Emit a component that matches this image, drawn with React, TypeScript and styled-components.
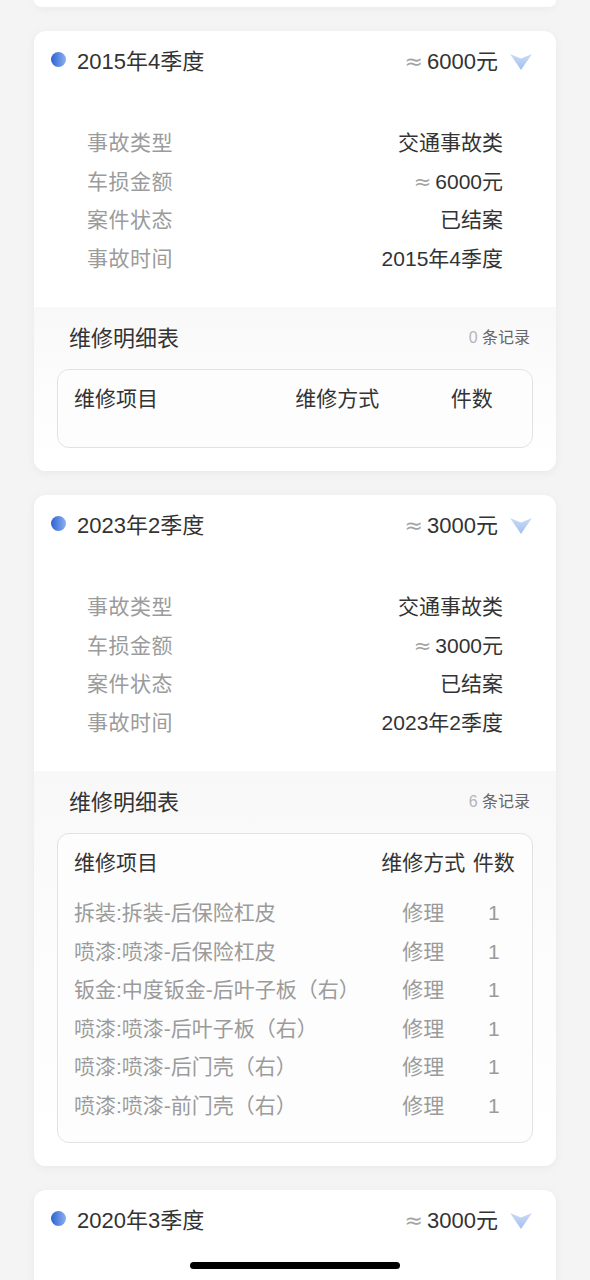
import React from 'react';
import styled, { createGlobalStyle } from 'styled-components';

type RepairItem = {
  name: string;
  method: string;
  count: number;
};

type AccidentRecord = {
  quarter: string;
  amount: number;
  type: string;
  status: string;
  repairs: RepairItem[];
};

const GlobalStyle = createGlobalStyle`
  html, body {
    margin: 0;
    padding: 0;
    background: #f4f4f4;
  }

  body {
    font-family: 'Liberation Sans', 'Noto Sans CJK SC', sans-serif;
    color: #333;
  }
`;

const records: AccidentRecord[] = [
  {
    quarter: '2015年4季度',
    amount: 6000,
    type: '交通事故类',
    status: '已结案',
    repairs: [],
  },
  {
    quarter: '2023年2季度',
    amount: 3000,
    type: '交通事故类',
    status: '已结案',
    repairs: [
      { name: '拆装:拆装-后保险杠皮', method: '修理', count: 1 },
      { name: '喷漆:喷漆-后保险杠皮', method: '修理', count: 1 },
      { name: '钣金:中度钣金-后叶子板（右）', method: '修理', count: 1 },
      { name: '喷漆:喷漆-后叶子板（右）', method: '修理', count: 1 },
      { name: '喷漆:喷漆-后门壳（右）', method: '修理', count: 1 },
      { name: '喷漆:喷漆-前门壳（右）', method: '修理', count: 1 },
    ],
  },
  {
    quarter: '2020年3季度',
    amount: 3000,
    type: '交通事故类',
    status: '已结案',
    repairs: [],
  },
];

const ArrowDown = () => (
  <S.Arrow viewBox="0 0 22 16" width="22" height="16">
    <defs>
      <linearGradient id="arrowFill" x1="0" y1="0" x2="0" y2="1">
        <stop offset="0" stopColor="#cadcf6" />
        <stop offset="1" stopColor="#a2bfef" />
      </linearGradient>
    </defs>
    <path d="M0 0 L11 4.5 L22 0 L11 16 Z" fill="url(#arrowFill)" />
  </S.Arrow>
);

const RecordCard = ({ record }: { record: AccidentRecord }) => {
  return (
    <S.Card>
      <S.Header>
        <S.Dot />
        <S.Title>{record.quarter}</S.Title>
        <S.HeaderAmount>
          <S.Approx>≈</S.Approx>
          {record.amount}元
        </S.HeaderAmount>
        <ArrowDown />
      </S.Header>

      <S.Details>
        <S.DetailRow>
          <S.Label>事故类型</S.Label>
          <S.Value>{record.type}</S.Value>
        </S.DetailRow>
        <S.DetailRow>
          <S.Label>车损金额</S.Label>
          <S.Value>
            <S.Approx>≈</S.Approx>
            {record.amount}元
          </S.Value>
        </S.DetailRow>
        <S.DetailRow>
          <S.Label>案件状态</S.Label>
          <S.Value>{record.status}</S.Value>
        </S.DetailRow>
        <S.DetailRow>
          <S.Label>事故时间</S.Label>
          <S.Value>{record.quarter}</S.Value>
        </S.DetailRow>
      </S.Details>

      <S.RepairSection>
        <S.SectionHead>
          <S.SectionTitle>维修明细表</S.SectionTitle>
          <S.RecordCount>
            <S.CountNumber>{record.repairs.length}</S.CountNumber> 条记录
          </S.RecordCount>
        </S.SectionHead>
        <S.TableBox>
          <S.Table>
            <thead>
              <tr>
                <S.Th $align="left">维修项目</S.Th>
                <S.Th $align="center">维修方式</S.Th>
                <S.Th $align="center">件数</S.Th>
              </tr>
            </thead>
            <tbody>
              {record.repairs.map((item, index) => (
                <tr key={index}>
                  <S.Td $align="left">{item.name}</S.Td>
                  <S.Td $align="center">{item.method}</S.Td>
                  <S.Td $align="center">{item.count}</S.Td>
                </tr>
              ))}
            </tbody>
          </S.Table>
        </S.TableBox>
      </S.RepairSection>
    </S.Card>
  );
};

const App = () => {
  return (
    <>
      <GlobalStyle />
      <S.Page>
        <S.CardTail />
        {records.map((record) => (
          <RecordCard key={record.quarter} record={record} />
        ))}
      </S.Page>
      <S.HomeIndicator />
    </>
  );
};

export default App;

const S = {
  Page: styled.div`
    display: flex;
    flex-direction: column;
    gap: 24px;

    padding: 0 34px 40px;
  `,

  CardTail: styled.div`
    height: 7px;
    border-radius: 0 0 12px 12px;

    background: #fff;
    box-shadow: 0 2px 10px rgba(0, 0, 0, 0.05);
  `,

  Card: styled.div`
    overflow: hidden;

    border-radius: 12px;

    background: #fff;
    box-shadow: 0 2px 10px rgba(0, 0, 0, 0.05);
  `,

  Header: styled.div`
    display: flex;
    align-items: center;

    height: 60px;
    padding: 0 24px 4px 17px;
    box-sizing: border-box;
  `,

  Dot: styled.span`
    display: block;
    flex-shrink: 0;

    width: 15px;
    height: 15px;
    margin-right: 11px;
    border-radius: 50%;

    background: linear-gradient(90deg, #2c63d3, #8cb0ef);
  `,

  Title: styled.div`
    flex: 1;

    font-size: 22px;
    color: #333;
  `,

  HeaderAmount: styled.div`
    font-size: 22px;
    color: #333;
  `,

  Approx: styled.span`
    margin-right: 4px;

    font-family: 'DejaVu Sans', sans-serif;
    color: #a3a3a3;
  `,

  Arrow: styled.svg`
    flex-shrink: 0;
    margin: 5px 0 0 12px;
  `,

  Details: styled.div`
    display: flex;
    flex-direction: column;

    padding: 31px 53px 31px;
  `,

  DetailRow: styled.div`
    display: flex;
    justify-content: space-between;
    align-items: center;

    height: 38.5px;

    font-size: 21px;
  `,

  Label: styled.span`
    letter-spacing: 0.5px;
    color: #9b9b9b;
  `,

  Value: styled.span`
    color: #333;
  `,

  RepairSection: styled.div`
    padding: 0 23px 23px;

    background: linear-gradient(180deg, #f8f8f9 0%, #fcfcfc 45%, #ffffff 100%);
  `,

  SectionHead: styled.div`
    display: flex;
    justify-content: space-between;
    align-items: center;

    height: 62px;
    padding: 0 3px 4px 12px;
    box-sizing: border-box;
  `,

  SectionTitle: styled.div`
    font-size: 22px;
    color: #333;
  `,

  RecordCount: styled.div`
    font-size: 16px;
    color: #666;
  `,

  CountNumber: styled.span`
    color: #b5b5b5;
  `,

  TableBox: styled.div`
    padding: 11px 14px 17px;
    border: 1px solid #e2e2e2;
    border-radius: 12px;

    background: #fdfdfd;
  `,

  Table: styled.table`
    width: 100%;
    border-collapse: collapse;
  `,

  Th: styled.th<{ $align: 'left' | 'center' }>`
    height: 36px;
    padding: 0 2px 13px;

    font-size: 21px;
    font-weight: 400;
    line-height: 36px;
    text-align: ${({ $align }) => $align};
    white-space: nowrap;
    color: #333;
  `,

  Td: styled.td<{ $align: 'left' | 'center' }>`
    height: 38.5px;
    padding: 0 2px;

    font-size: 21px;
    line-height: 38.5px;
    text-align: ${({ $align }) => $align};
    white-space: nowrap;
    color: #9b9b9b;
  `,

  HomeIndicator: styled.div`
    position: fixed;
    left: 50%;
    bottom: 11px;

    width: 210px;
    height: 7px;
    margin-left: -105px;
    border-radius: 4px;

    background: #000;
  `,
};
